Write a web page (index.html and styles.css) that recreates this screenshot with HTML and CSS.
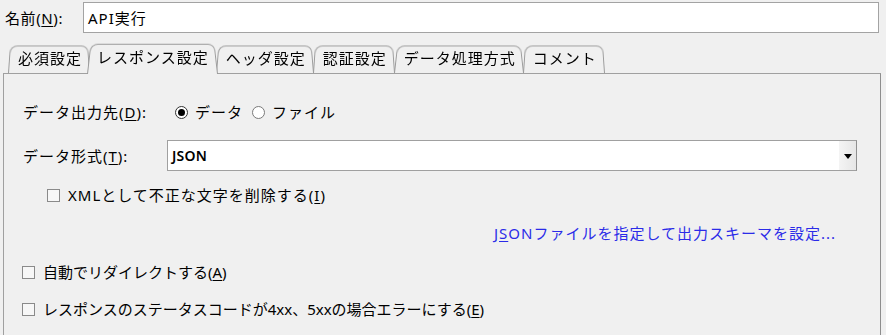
FILE: index.html
```html
<!DOCTYPE html>
<html lang="ja">
<head>
<meta charset="utf-8">
<title>API実行</title>
<link rel="stylesheet" href="styles.css">
</head>
<body>
<div class="name-row">
  <label class="name-label">名前(<u>N</u>):</label>
  <div class="text-field">API実行</div>
</div>
<div class="tabs">
  <div class="tab tab-first">必須設定</div>
  <div class="tab tab-active">レスポンス設定</div>
  <div class="tab">ヘッダ設定</div>
  <div class="tab">認証設定</div>
  <div class="tab">データ処理方式</div>
  <div class="tab">コメント</div>
</div>
<div class="panel">
  <div class="row row-output">
    <span class="field-label">データ出力先(<u>D</u>):</span>
    <span class="radio checked"></span><span class="radio-text">データ</span>
    <span class="radio"></span><span class="radio-text">ファイル</span>
  </div>
  <div class="row row-format">
    <span class="field-label">データ形式(<u>T</u>):</span>
    <div class="combo">
      <span class="combo-value">JSON</span>
      <span class="combo-button"><span class="arrow"></span></span>
    </div>
  </div>
  <div class="row row-check row-indent">
    <span class="checkbox"></span><span class="wide">XMLとして不正な文字を削除する(<u>I</u>)</span>
  </div>
  <div class="row row-link">
    <span class="link">J<u>S</u>ONファイルを指定して出力スキーマを設定...</span>
  </div>
  <div class="row row-check row-redirect">
    <span class="checkbox"></span><span>自動でリダイレクトする(<u>A</u>)</span>
  </div>
  <div class="row row-check row-status">
    <span class="checkbox"></span><span>レスポンスのステータスコードが4xx、5xxの場合エラーにする(<u>E</u>)</span>
  </div>
</div>
</body>
</html>
```
FILE: styles.css
```css
html, body {
  margin: 0;
  padding: 0;
  background: #f0f0f0;
  overflow: hidden;
}
body {
  width: 886px;
  height: 335px;
  font-family: "Noto Sans", "Noto Sans CJK JP", sans-serif;
  font-size: 15px;
  line-height: 20px;
  color: #000;
}
u {
  text-decoration: underline;
  text-underline-offset: 2px;
  text-decoration-thickness: 1px;
}
.name-row {
  display: flex;
  align-items: center;
  padding: 2px 7px 0 5px;
  height: 31px;
}
.name-label {
  width: 78px;
  flex: none;
  letter-spacing: 0.6px;
}
.text-field {
  flex: 1;
  height: 31px;
  box-sizing: border-box;
  border: 1px solid #a3a3a3;
  background: #fff;
  padding-left: 4px;
  display: flex;
  align-items: center;
  letter-spacing: 1px;
}
.tabs {
  display: flex;
  align-items: flex-end;
  height: 31px;
  margin-top: 9px;
  padding-left: 8px;
  position: relative;
  z-index: 2;
}
.tab {
  position: relative;
  height: 29px;
  box-sizing: border-box;
  padding: 0 8px 2px 10px;
  display: flex;
  align-items: center;
  margin-right: -1px;
  letter-spacing: 1px;
  z-index: 1;
}
.tab::before {
  content: "";
  position: absolute;
  inset: 0;
  border: 1px solid #9c9c9c;
  border-bottom: none;
  border-radius: 8px 7px 0 0;
  background: #f0f0f0;
  transform: perspective(60px) rotateX(6deg);
  transform-origin: bottom;
  z-index: -1;
}
.tab-active {
  height: 32px;
  margin-bottom: -1px;
  padding: 0 9px 3px 10px;
  margin-left: -2px;
  margin-right: -2px;
  z-index: 3;
}
.panel {
  margin: 0 5px 0 3px;
  border: 1px solid #a0a0a0;
  border-bottom: none;
  border-right-color: #8e8e8e;
  height: 270px;
  box-sizing: border-box;
  position: relative;
  z-index: 1;
}
.row {
  display: flex;
  align-items: center;
  height: 22px;
  padding-left: 19px;
}
.row-output {
  margin-top: 26px;
  height: 24px;
}
.field-label {
  width: 144px;
  flex: none;
  letter-spacing: 1px;
}
.radio-text {
  letter-spacing: 1px;
}
.radio {
  width: 13px;
  height: 13px;
  box-sizing: border-box;
  border-radius: 50%;
  border: 1px solid #7a7a7a;
  background: #fff;
  margin-left: 8px;
  margin-right: 7px;
  position: relative;
  flex: none;
}
.radio + .radio-text + .radio {
  margin-left: 9px;
}
.radio.checked {
  border-color: #333;
}
.radio.checked::after {
  content: "";
  position: absolute;
  left: 2px;
  top: 2px;
  width: 7px;
  height: 7px;
  border-radius: 50%;
  background: #000;
}
.row-format {
  margin-top: 16px;
  height: 31px;
}
.combo {
  flex: none;
  width: 690px;
  height: 31px;
  box-sizing: border-box;
  border: 1px solid #a0a0a0;
  border-right-color: #8f8f8f;
  background: #fff;
  display: flex;
  align-items: center;
  padding-left: 4px;
}
.combo-value {
  flex: 1;
  font-family: "Noto Sans", sans-serif;
  font-weight: 600;
  font-size: 14px;
  letter-spacing: 0.2px;
}
.combo-button {
  width: 17px;
  height: 29px;
  background: linear-gradient(to right, #f4f4f4, #e6e6e6);
  display: flex;
  align-items: center;
  justify-content: center;
}
.arrow {
  width: 0;
  height: 0;
  border-left: 4px solid transparent;
  border-right: 4px solid transparent;
  border-top: 5px solid #000;
  margin-top: 2px;
}
.checkbox {
  width: 13px;
  height: 13px;
  box-sizing: border-box;
  border: 1px solid #8a8a8a;
  background: #f7f7f7;
  margin-right: 8px;
  flex: none;
}
.wide {
  letter-spacing: 1px;
}
.row-indent {
  margin-top: 13px;
  padding-left: 43px;
}
.row-link {
  margin-top: 16px;
  justify-content: flex-end;
  padding-right: 44px;
}
.link {
  color: #2b2be8;
  letter-spacing: 1px;
}
.row-redirect {
  margin-top: 17px;
  padding-left: 18px;
}
.row-status {
  margin-top: 15px;
  padding-left: 18px;
}
```
